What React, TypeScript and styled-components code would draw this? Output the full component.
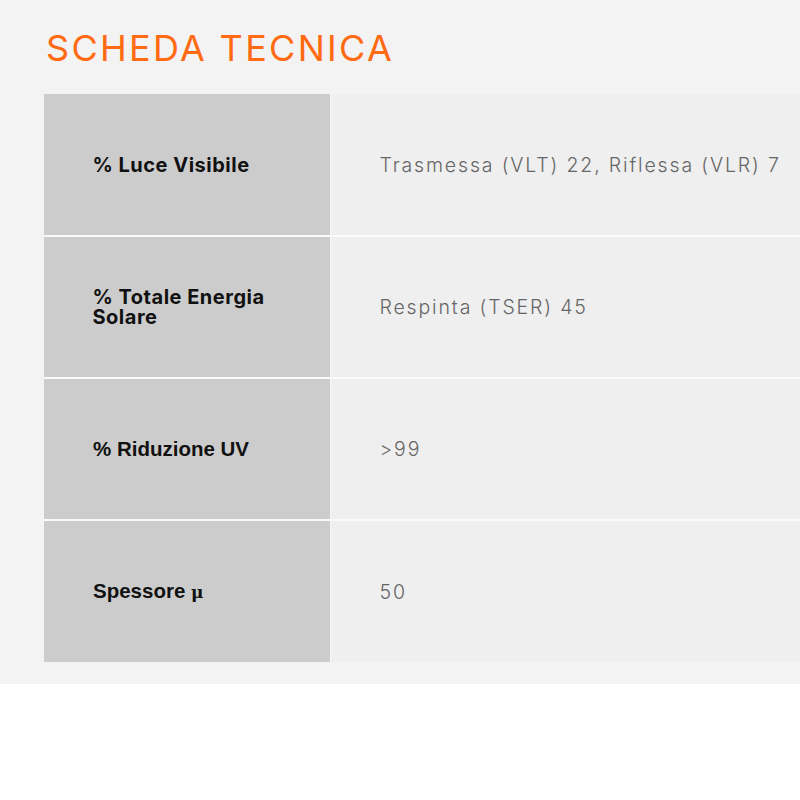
import React from "react";
import styled, { createGlobalStyle } from "styled-components";

const Global = createGlobalStyle`
  html, body { margin: 0; padding: 0; background: #ffffff; }
  body { font-family: "Inter", "Liberation Sans", sans-serif; overflow: hidden; }
`;

const Section = styled.section`
  background: #f3f3f3;
  padding: 30px 0 22px 44px;
  width: 100%;
  box-sizing: border-box;
  overflow: hidden;
`;

const Title = styled.h2`
  margin: 0 0 27px 2px;
  font-family: "Inter", sans-serif;
  font-weight: 400;
  font-size: 36px;
  line-height: 37px;
  letter-spacing: 2.3px;
  color: #ff6a13;
`;

const Table = styled.table`
  border-collapse: collapse;
  width: 960px;
  table-layout: fixed;
`;

const Row = styled.tr`
  height: 142px;
  & + & > td { border-top: 2px solid #fafafa; }
`;

const Label = styled.td<{ $alt?: boolean }>`
  width: 286px;
  box-sizing: border-box;
  background: #cccccc;
  padding: ${(p) => (p.$alt ? "0 30px 0 49px" : "0 30px 0 48.5px")};
  vertical-align: middle;
  font-family: ${(p) => (p.$alt ? '"Liberation Sans", Arial, sans-serif' : '"Inter", sans-serif')};
  font-weight: 700;
  font-size: ${(p) => (p.$alt ? "20.5px" : "20px")};
  letter-spacing: ${(p) => (p.$alt ? "0" : "0.5px")};
  line-height: 20px;
  color: #111111;
  border-right: 1px solid #f6f6f6;
`;

const Mu = styled.span`
  font-family: "DejaVu Serif", serif;
  font-size: 17px;
`;

const Value = styled.td`
  background: #efefef;
  padding: 0 0 0 49px;
  vertical-align: middle;
  font-family: "Inter", sans-serif;
  font-weight: 300;
  font-size: 19.5px;
  letter-spacing: 1.85px;
  color: #666666;
  white-space: nowrap;
`;

const rows: { label: React.ReactNode; value: string; alt?: boolean }[] = [
  { label: "% Luce Visibile", value: "Trasmessa (VLT) 22, Riflessa (VLR) 7" },
  { label: "% Totale Energia Solare", value: "Respinta (TSER) 45" },
  { label: "% Riduzione UV", value: ">99", alt: true },
  {
    label: (
      <>
        Spessore <Mu>μ</Mu>
      </>
    ),
    value: "50",
    alt: true,
  },
];

export default function App() {
  return (
    <>
      <Global />
      <Section>
        <Title>SCHEDA TECNICA</Title>
        <Table>
          <tbody>
            {rows.map((r, i) => (
              <Row key={i}>
                <Label $alt={r.alt}>{r.label}</Label>
                <Value>{r.value}</Value>
              </Row>
            ))}
          </tbody>
        </Table>
      </Section>
    </>
  );
}
